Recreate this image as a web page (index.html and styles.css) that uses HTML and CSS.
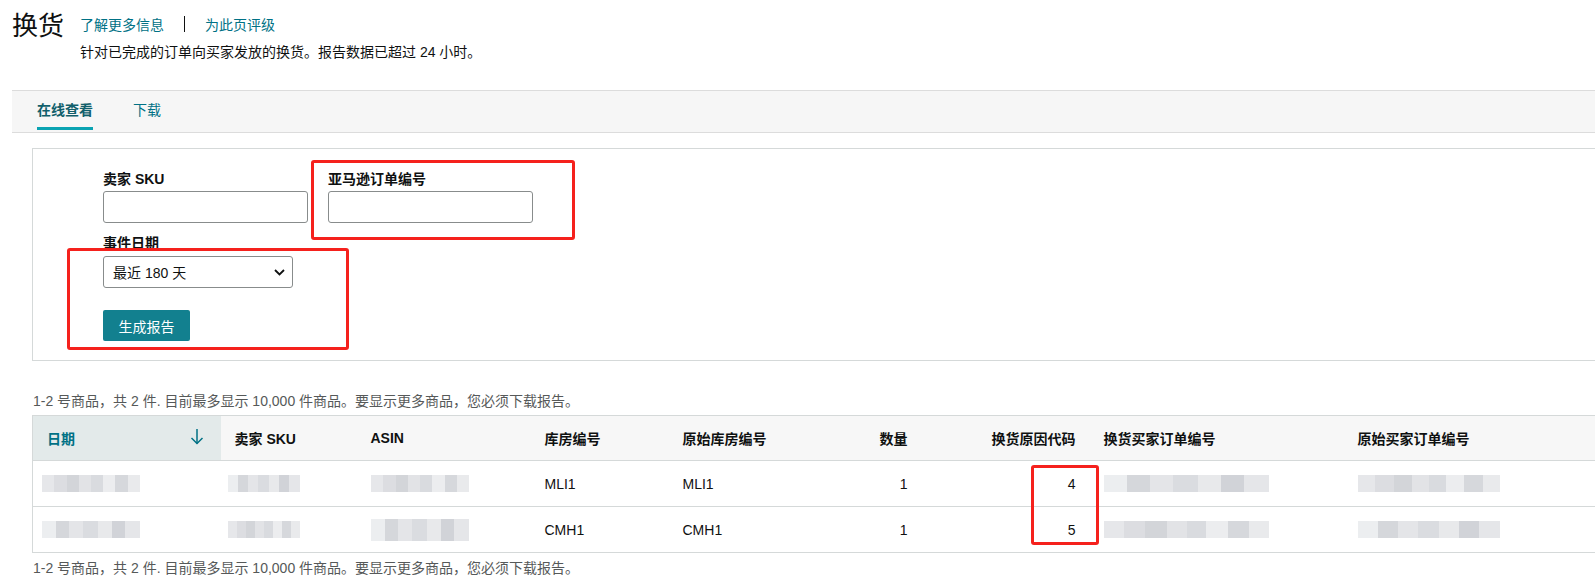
FILE: index.html
```html
<!DOCTYPE html>
<html lang="zh-CN">
<head>
    <meta charset="UTF-8">
    <meta name="viewport" content="width=device-width, initial-scale=1.0">
    <title>换货</title>
    <link rel="stylesheet" href="styles.css">
</head>
<body>
    <header class="page-header">
        <h1 class="page-title">换货</h1>
        <div class="page-intro">
            <div class="page-links">
                <a href="#">了解更多信息</a>
                <span class="divider"></span>
                <a href="#">为此页评级</a>
            </div>
            <p class="page-desc">针对已完成的订单向买家发放的换货。报告数据已超过 24 小时。</p>
        </div>
    </header>

    <nav class="tabs">
        <a href="#" class="tab active">在线查看</a>
        <a href="#" class="tab">下载</a>
    </nav>

    <!-- 筛选条件 -->
    <section class="filter-panel">
        <div class="filter-grid">
            <div class="field">
                <label>卖家 SKU</label>
                <input type="text" class="text-input">
            </div>
            <div class="field">
                <label>亚马逊订单编号</label>
                <input type="text" class="text-input">
            </div>
            <div class="field field-date">
                <label>事件日期</label>
                <div class="select-box">
                    <span>最近 180 天</span>
                    <svg width="11" height="7" viewBox="0 0 11 7"><polyline points="1,1 5.5,5.5 10,1" fill="none" stroke="#0f1111" stroke-width="1.8"/></svg>
                </div>
            </div>
        </div>
        <button class="btn-primary">生成报告</button>
    </section>

    <p class="result-count">1-2 号商品，共 2 件. 目前最多显示 10,000 件商品。要显示更多商品，您必须下载报告。</p>

    <table class="report-table">
        <colgroup>
            <col style="width: 188px">
            <col style="width: 136px">
            <col style="width: 174px">
            <col style="width: 138px">
            <col style="width: 131px">
            <col style="width: 122px">
            <col style="width: 168px">
            <col style="width: 254px">
            <col style="width: 330px">
        </colgroup>
        <thead>
            <tr>
                <th class="sorted">
                    <span>日期</span>
                    <svg width="14" height="17" viewBox="0 0 14 17"><line x1="7" y1="1" x2="7" y2="15.5" stroke="#007185" stroke-width="1.5"/><polyline points="1.5,10 7,15.5 12.5,10" fill="none" stroke="#007185" stroke-width="1.5"/></svg>
                </th>
                <th>卖家 SKU</th>
                <th>ASIN</th>
                <th>库房编号</th>
                <th>原始库房编号</th>
                <th class="num">数量</th>
                <th class="num">换货原因代码</th>
                <th>换货买家订单编号</th>
                <th>原始买家订单编号</th>
            </tr>
        </thead>
        <tbody>
            <tr>
                <td><span class="mosaic m-date m-a"></span></td>
                <td><span class="mosaic m-sku m-b"></span></td>
                <td><span class="mosaic m-asin m-a"></span></td>
                <td>MLI1</td>
                <td>MLI1</td>
                <td class="num">1</td>
                <td class="num">4</td>
                <td><span class="mosaic m-order m-wide m-b"></span></td>
                <td><span class="mosaic m-order m-a"></span></td>
            </tr>
            <tr>
                <td><span class="mosaic m-date m-b"></span></td>
                <td><span class="mosaic m-sku m-a"></span></td>
                <td><span class="mosaic m-asin m-tall m-b"></span></td>
                <td>CMH1</td>
                <td>CMH1</td>
                <td class="num">1</td>
                <td class="num">5</td>
                <td><span class="mosaic m-order m-wide m-a"></span></td>
                <td><span class="mosaic m-order m-b"></span></td>
            </tr>
        </tbody>
    </table>

    <p class="result-count result-count-bottom">1-2 号商品，共 2 件. 目前最多显示 10,000 件商品。要显示更多商品，您必须下载报告。</p>

    <!-- 标注框 -->
    <div class="mark mark-order"></div>
    <div class="mark mark-date"></div>
    <div class="mark mark-code"></div>
</body>
</html>
```

FILE: styles.css
```css
* {
    margin: 0;
    padding: 0;
    box-sizing: border-box;
}

html, body {
    overflow: hidden;
}

body {
    position: relative;
    font-family: 'Liberation Sans', 'Noto Sans CJK SC', sans-serif;
    font-size: 14px;
    color: #0f1111;
    background: #fff;
    width: 1595px;
    height: 583px;
}

a {
    color: #007185;
    text-decoration: none;
}

/* 页头 */
.page-header {
    display: flex;
    align-items: flex-start;
    gap: 16px;
    padding: 11px 0 0 12px;
    height: 90px;
}

.page-title {
    font-size: 26px;
    font-weight: normal;
    line-height: 30px;
}

.page-links {
    display: flex;
    align-items: center;
    gap: 20px;
    height: 26px;
}

.divider {
    width: 1px;
    height: 16px;
    background: #0f1111;
}

.page-desc {
    margin-top: 5px;
    line-height: 20px;
}

/* 标签页 */
.tabs {
    display: flex;
    gap: 40px;
    margin-left: 12px;
    padding: 0 0 2px 25px;
    background: #f6f6f6;
    border-top: 1px solid #dcdcdc;
    border-bottom: 1px solid #dcdcdc;
}

.tab {
    padding: 9px 0 7px;
    line-height: 20px;
    border-bottom: 3px solid transparent;
}

.tab.active {
    color: #115f6b;
    font-weight: bold;
    border-bottom-color: #0aa3b2;
}

/* 筛选面板 */
.filter-panel {
    margin: 15px 0 0 32px;
    width: 1600px;
    border: 1px solid #d5d9d9;
    padding: 20px 0 19px 70px;
}

.filter-grid {
    display: grid;
    grid-template-columns: 205px 205px;
    column-gap: 20px;
    row-gap: 10px;
}

.field label {
    display: block;
    font-weight: bold;
    line-height: 20px;
    margin-bottom: 2px;
}

.field-date label {
    margin-bottom: 3px;
}

.text-input {
    display: block;
    width: 205px;
    height: 32px;
    border: 1px solid #888c8c;
    border-radius: 3px;
    background: #fff;
}

.select-box {
    width: 190px;
    height: 32px;
    border: 1px solid #888c8c;
    border-radius: 3px;
    display: flex;
    align-items: center;
    justify-content: space-between;
    padding: 0 7px 0 9px;
}

.btn-primary {
    margin-top: 22px;
    width: 87px;
    height: 31px;
    border: none;
    border-radius: 2px;
    background: #12808f;
    color: #fff;
    font-family: inherit;
    font-size: 14px;
}

/* 结果统计 */
.result-count {
    margin: 30px 0 0 33px;
    line-height: 20px;
    color: #565959;
}

.result-count-bottom {
    margin-top: 5px;
}

/* 报表 */
.report-table {
    margin: 4px 0 0 32px;
    width: 1641px;
    table-layout: fixed;
    border-collapse: collapse;
    border: 1px solid #d5d9d9;
}

.report-table th,
.report-table td {
    height: 45px;
    padding: 0 14px;
    text-align: left;
    vertical-align: middle;
    border-bottom: 1px solid #d5d9d9;
    white-space: nowrap;
}

.report-table th {
    background: #f7f7f7;
    font-weight: bold;
}

.report-table td {
    height: 46px;
}

.report-table th.sorted {
    background: #e3eaea;
    color: #007185;
    padding-right: 17px;
}

.sorted svg {
    float: right;
}

.report-table .num {
    text-align: right;
}

/* 打码块 */
.mosaic {
    display: inline-block;
    height: 17px;
    vertical-align: middle;
}

.m-date { width: 98px; margin-left: -5px; }
.m-sku { width: 72px; margin-left: -7px; }
.m-asin { width: 98px; }
.m-order { width: 142px; }
.m-wide { width: 165px; }
.m-tall { height: 22px; }

.m-a {
    background: linear-gradient(90deg,
        #e6e7ea 0 12%, #dcdde1 12% 25%, #d3d5d9 25% 38%, #e2e3e6 38% 50%,
        #d9dbdf 50% 62%, #ecedef 62% 75%, #d6d8dc 75% 88%, #e9eaec 88% 100%);
}

.m-b {
    background: linear-gradient(90deg,
        #eceef0 0 14%, #d5d7db 14% 28%, #e4e5e8 28% 42%, #dadce0 42% 57%,
        #e8e9eb 57% 71%, #d1d3d8 71% 85%, #e5e6e9 85% 100%);
}

/* 红色标注 */
.mark {
    position: absolute;
    border: 3px solid #f5211d;
    border-radius: 3px;
}

.mark-order {
    left: 311px;
    top: 160px;
    width: 264px;
    height: 80px;
}

.mark-date {
    left: 67px;
    top: 248px;
    width: 282px;
    height: 102px;
}

.mark-code {
    left: 1031px;
    top: 465px;
    width: 68px;
    height: 80px;
}
```
